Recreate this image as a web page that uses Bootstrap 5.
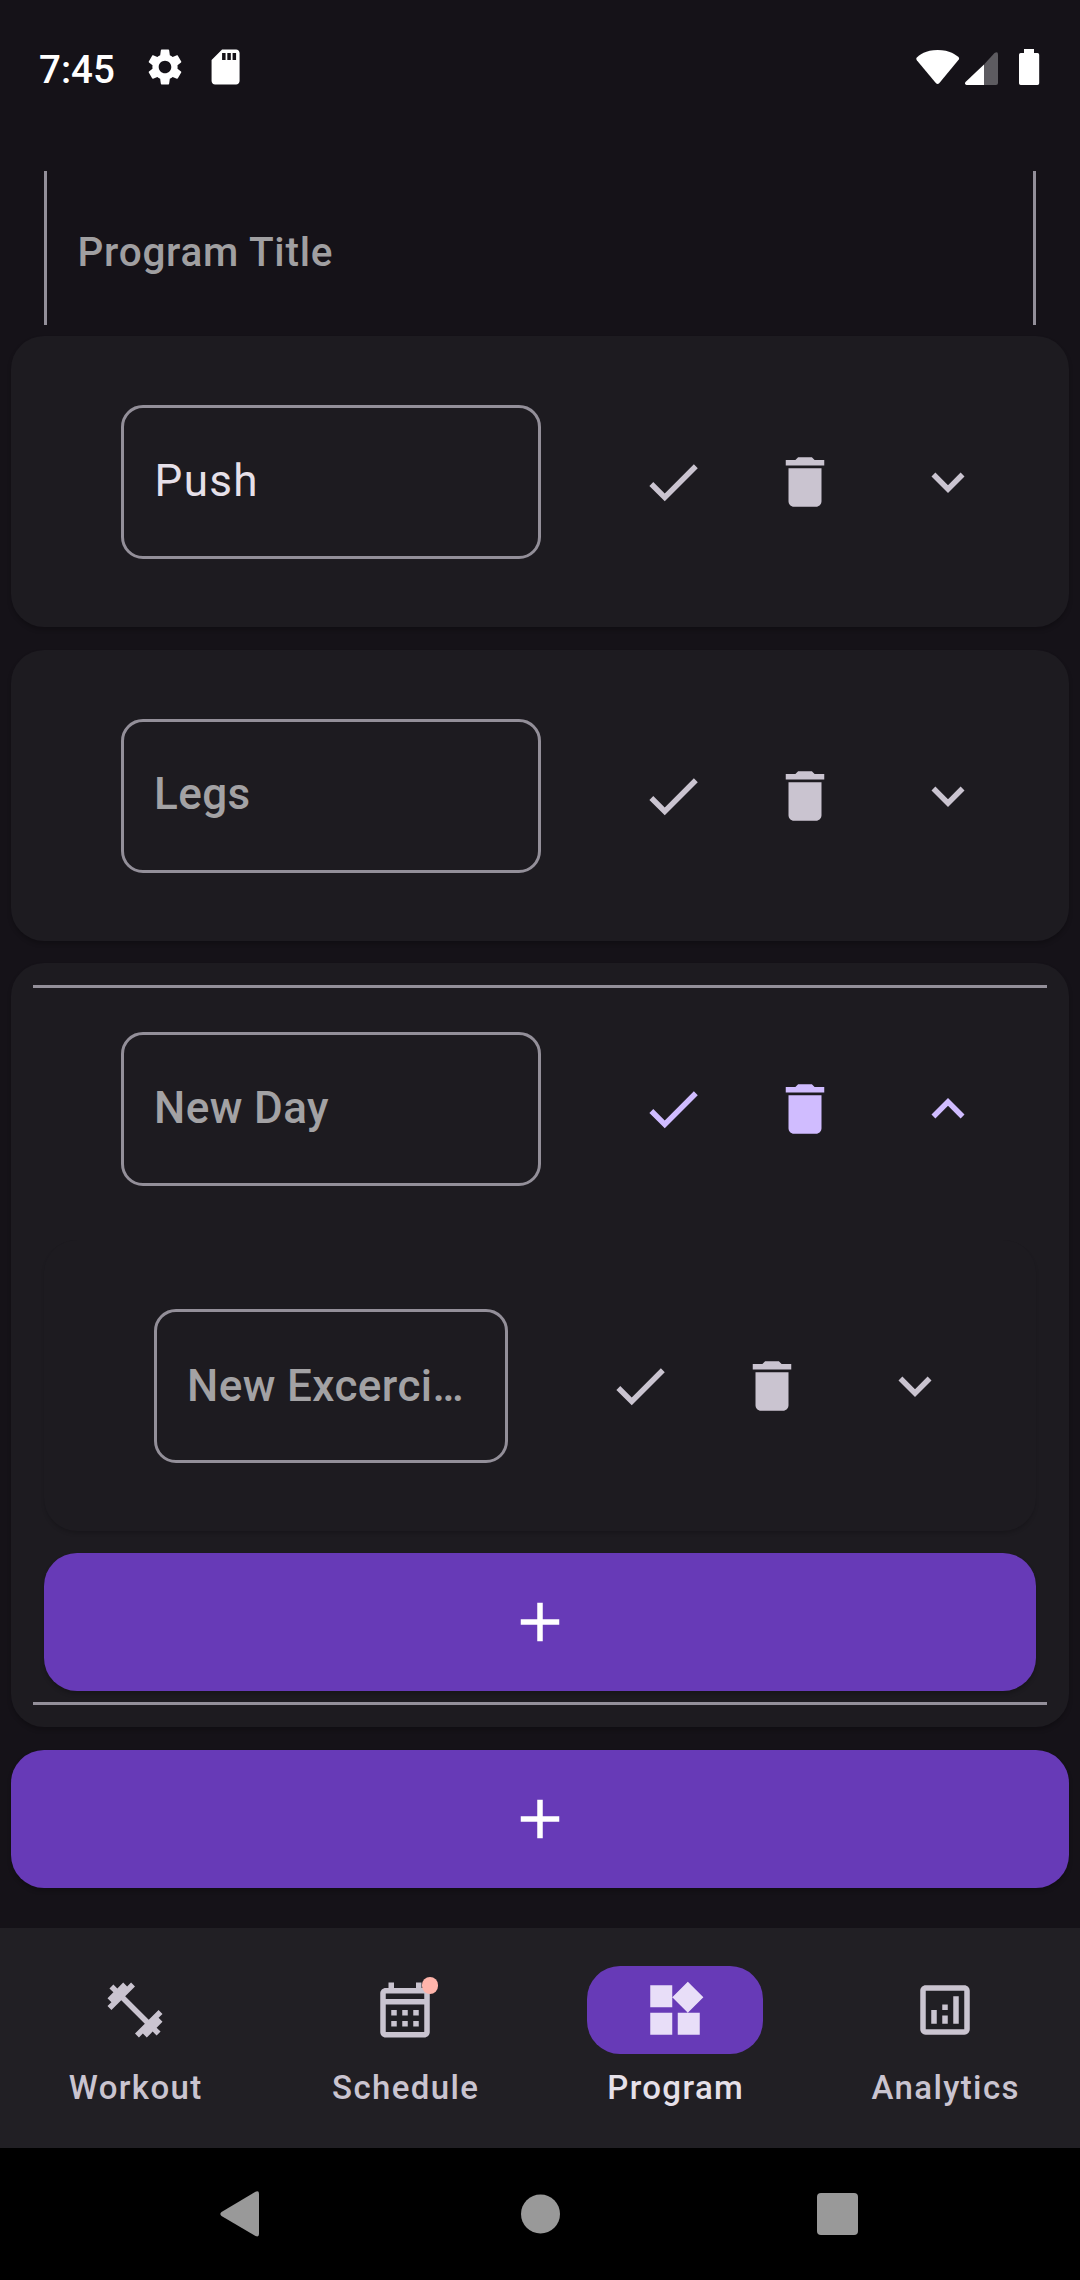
<!DOCTYPE html>
<html lang="en" data-bs-theme="dark">
<head>
<meta charset="utf-8">
<meta name="viewport" content="width=device-width, initial-scale=1">
<title>Program</title>
<link rel="stylesheet" href="https://cdn.jsdelivr.net/npm/bootstrap@5.3.0/dist/css/bootstrap.min.css">
<style>
:root{--surface:#151218;--panel:#1d1b20;--navbg:#211f24;--outline:#938f99;--soft:#cac4d0;--accent:#d0bcff;--purple:#673ab7}
html,body{margin:0;background:var(--surface)}
body{width:1080px;height:2280px;overflow:hidden;font-family:Roboto,"Noto Sans",sans-serif;color:#e6e0e9;letter-spacing:0}
svg{display:block;flex:none;fill:currentColor}
.status-bar{height:171px;padding:46px 0 0 39px;color:#fff}
.clock{font-size:38.5px;font-weight:500;line-height:48px;width:104.5px;letter-spacing:0}
.card-icon{margin:0 auto 0 17px}
.content-area{height:1757px}
.title-field{height:154px;margin:0 44px 11px;padding:9px 30.5px 0;border:solid var(--outline);border-width:0 3px;font-size:40.5px;font-weight:500;letter-spacing:.75px;color:#a09fa1}
.day-card{background:var(--panel);border:0;border-radius:33px;margin:0 11px 23px;box-shadow:0 3px 4px rgba(0,0,0,.22)}
.day-card.tight{margin-bottom:22px}
.day-card.nested{margin:0 33px 22px;box-shadow:0 3px 4px -1px rgba(0,0,0,.2)}
.head-row{height:291px;padding:0 88px 0 110px}
.nested .head-row{padding-top:1px}
.name-field{height:154px;border:3px solid var(--outline);border-radius:22px;background:transparent;padding:0 30px 2px;margin-right:66px;font-size:44px;line-height:1.2;min-width:0}
.name-field.filled{font-weight:400;letter-spacing:1.375px;color:#e6e0e9;padding-bottom:0;padding-left:30.5px}
.name-field.hint{font-weight:500;letter-spacing:.42px;color:#a3a2a4}
.nested .name-field{padding-bottom:0}
.tool{width:132px;height:132px;color:var(--soft);border:0;background:none;padding:0}
.chev{width:66px;margin-left:44px;color:var(--soft)}
.open-row .tool,.open-row .chev{color:var(--accent)}
.open-row .chev svg{transform:rotate(180deg)}
.rule{height:3px;background:var(--outline);margin:0 22px}
.rule.last{margin-bottom:22px}
.open-card{height:764px;padding-top:22px}
.head-row.open-row{height:242px}
.add-btn{height:138px;border:0;border-radius:33px;background:var(--purple);color:#fff;box-shadow:0 3px 4px rgba(0,0,0,.22)}
.add-inner{margin:0 33px 11px}
.add-outer{margin:0 11px}
.tab-bar{height:220px;background:var(--navbg);padding-top:38px}
.tab-item{color:var(--soft);font-size:33px;font-weight:500;letter-spacing:1.375px;line-height:46px}
.tab-item>span{padding-left:1.4px}
.pill{width:176px;height:88px;border-radius:33px;margin-bottom:11px}
.tab-item.current{color:#e6e0e9}
.tab-item.current .pill{background:var(--purple);color:#e8def8}
.alert-dot{width:16.5px;height:16.5px;border-radius:50%;background:#ffb4ab;top:11px;right:55px}
.system-bar{height:132px;background:#000;color:#999;padding-left:220px}
.nav-home{margin-left:262px}
.nav-recent{margin-left:257px}
</style>
</head>
<body class="d-flex flex-column">
<svg width="0" height="0" class="d-none" aria-hidden="true">
  <symbol id="i-check" viewBox="0 0 24 24"><path d="M9 16.17 4.83 12l-1.42 1.41L9 19 21 7l-1.41-1.41z"/></symbol>
  <symbol id="i-trash" viewBox="0 0 24 24"><path d="M6 19c0 1.1.9 2 2 2h8c1.1 0 2-.9 2-2V7H6v12zM19 4h-3.5l-1-1h-5l-1 1H5v2h14V4z"/></symbol>
  <symbol id="i-chev" viewBox="0 0 24 24"><path d="M16.59 8.59 12 13.17 7.41 8.59 6 10l6 6 6-6z"/></symbol>
  <symbol id="i-plus" viewBox="0 0 24 24"><path d="M19 13h-6v6h-2v-6H5v-2h6V5h2v6h6z"/></symbol>
</svg>

<header class="status-bar d-flex align-items-start">
  <div class="clock">7:45</div>
  <svg width="42" height="42" viewBox="0 0 24 24"><path d="M19.14 12.94c.04-.3.06-.61.06-.94 0-.32-.02-.64-.07-.94l2.03-1.58c.18-.14.23-.41.12-.61l-1.92-3.32c-.12-.22-.37-.29-.59-.22l-2.39.96c-.5-.38-1.03-.7-1.62-.94L14.4 2.51c-.04-.29-.24-.51-.48-.51h-3.84c-.24 0-.43.22-.47.51l-.36 2.84c-.59.24-1.13.57-1.62.94l-2.39-.96c-.22-.08-.47 0-.59.22L2.74 8.87c-.12.21-.08.47.12.61l2.03 1.58c-.05.3-.09.63-.09.94s.02.64.07.94l-2.03 1.58c-.18.14-.23.41-.12.61l1.92 3.32c.12.22.37.29.59.22l2.39-.96c.5.38 1.03.7 1.62.94l.36 2.84c.05.29.24.51.48.51h3.84c.24 0 .44-.22.47-.51l.36-2.84c.59-.24 1.13-.56 1.62-.94l2.39.96c.22.08.47 0 .59-.22l1.92-3.32c.12-.22.07-.47-.12-.61l-2.01-1.58zM12 15.6c-1.98 0-3.6-1.62-3.6-3.6s1.62-3.6 3.6-3.6 3.6 1.62 3.6 3.6-1.62 3.6-3.6 3.6z"/></svg>
  <svg class="card-icon" width="42" height="42" viewBox="-.9 0 24 24"><path d="M18 2h-8L4 8v12c0 1.1.9 2 2 2h12c1.1 0 2-.9 2-2V4c0-1.1-.9-2-2-2zm-6 6h-2V4h2v4zm3 0h-2V4h2v4zm3 0h-2V4h2v4z"/></svg>
  <svg width="164" height="42" viewBox="916 46 164 42">
    <path d="M937.600 50C950 50 956 55 958.600 57.300q1 1.200 0 2.500L939.200 83.300q-1.600 1.400-3.200 0L916.800 60.300q-1-1.700 0-2.700C919.500 55 925.600 50 937.600 50z"/>
    <path fill="#5d5b60" d="M984 64.500 994.500 53q3.500-2.300 3.500 1.500V83q0 2-2 2h-12z"/>
    <path d="M984 64.500V85h-17.500q-2.500-1-1-3z"/>
    <path d="M1024 49h10v4h3.500q1.700 0 1.700 1.700V83.300q0 1.700-1.700 1.700h-16.800q-1.700 0-1.700-1.700V54.700q0-1.700 1.700-1.700h3.300z"/>
  </svg>
</header>

<main class="content-area">
  <div class="title-field d-flex align-items-center">Program Title</div>

  <section class="card day-card">
    <div class="head-row d-flex align-items-center">
      <div class="name-field filled flex-fill d-flex align-items-center">Push</div>
      <button class="tool d-flex align-items-center justify-content-center" aria-label="Save"><svg width="66" height="66"><use href="#i-check"/></svg></button>
      <button class="tool d-flex align-items-center justify-content-center" aria-label="Delete"><svg width="66" height="66"><use href="#i-trash"/></svg></button>
      <div class="chev"><svg width="66" height="66"><use href="#i-chev"/></svg></div>
    </div>
  </section>

  <section class="card day-card tight">
    <div class="head-row d-flex align-items-center">
      <div class="name-field hint flex-fill d-flex align-items-center">Legs</div>
      <button class="tool d-flex align-items-center justify-content-center" aria-label="Save"><svg width="66" height="66"><use href="#i-check"/></svg></button>
      <button class="tool d-flex align-items-center justify-content-center" aria-label="Delete"><svg width="66" height="66"><use href="#i-trash"/></svg></button>
      <div class="chev"><svg width="66" height="66"><use href="#i-chev"/></svg></div>
    </div>
  </section>

  <section class="card day-card open-card">
    <div class="rule"></div>
    <div class="head-row open-row d-flex align-items-center">
      <div class="name-field hint flex-fill d-flex align-items-center">New Day</div>
      <button class="tool d-flex align-items-center justify-content-center" aria-label="Save"><svg width="66" height="66"><use href="#i-check"/></svg></button>
      <button class="tool d-flex align-items-center justify-content-center" aria-label="Delete"><svg width="66" height="66"><use href="#i-trash"/></svg></button>
      <div class="chev"><svg width="66" height="66"><use href="#i-chev"/></svg></div>
    </div>
    <div class="card day-card nested mt-auto">
      <div class="head-row d-flex align-items-center">
        <div class="name-field hint flex-fill d-flex align-items-center text-nowrap">New Excerci…</div>
        <button class="tool d-flex align-items-center justify-content-center" aria-label="Save"><svg width="66" height="66"><use href="#i-check"/></svg></button>
        <button class="tool d-flex align-items-center justify-content-center" aria-label="Delete"><svg width="66" height="66"><use href="#i-trash"/></svg></button>
        <div class="chev"><svg width="66" height="66"><use href="#i-chev"/></svg></div>
      </div>
    </div>
    <button class="add-btn add-inner d-flex align-items-center justify-content-center" aria-label="Add exercise"><svg width="66" height="66"><use href="#i-plus"/></svg></button>
    <div class="rule last"></div>
  </section>

  <div class="add-outer d-grid">
    <button class="add-btn d-flex align-items-center justify-content-center" aria-label="Add day"><svg width="66" height="66"><use href="#i-plus"/></svg></button>
  </div>
</main>

<nav class="tab-bar d-flex text-center">
  <div class="tab-item col-3 d-flex flex-column align-items-center">
    <div class="pill d-flex align-items-center justify-content-center"><svg width="66" height="66" viewBox="0 0 24 24"><path d="M20.57 14.86 22 13.43 20.57 12 17 15.57 8.430 7 12 3.430 10.570 2 9.140 3.430 7.710 2 5.570 4.140 4.140 2.710 2.710 4.140l1.430 1.430L2 7.710l1.430 1.430L2 10.570 3.430 12 7 8.430 15.570 17 12 20.570 13.430 22l1.430-1.430L16.290 22l2.140-2.140 1.430 1.430 1.430-1.430-1.430-1.430L22 16.290z"/></svg></div>
    <span>Workout</span>
  </div>
  <div class="tab-item col-3 d-flex flex-column align-items-center">
    <div class="pill position-relative d-flex align-items-center justify-content-center"><svg width="66" height="66" viewBox="0 0 24 24"><path d="M19 4h-1V2h-2v2H8V2H6v2H5c-1.110 0-2 .9-2 2v14c0 1.100.890 2 2 2h14c1.100 0 2-.9 2-2V6c0-1.100-.9-2-2-2zm0 16H5V10h14v10zm0-12H5V6h14v2zM9 14H7v-2h2v2zm4 0h-2v-2h2v2zm4 0h-2v-2h2v2zm-8 4H7v-2h2v2zm4 0h-2v-2h2v2zm4 0h-2v-2h2v2z"/></svg><span class="alert-dot position-absolute"></span></div>
    <span>Schedule</span>
  </div>
  <div class="tab-item current col-3 d-flex flex-column align-items-center">
    <div class="pill d-flex align-items-center justify-content-center"><svg width="66" height="66" viewBox="0 0 24 24"><path d="M13 13v8h8v-8h-8zM3 21h8v-8H3v8zM3 3v8h8V3H3zm13.660-1.310L11 7.340 16.660 13l5.660-5.660z"/></svg></div>
    <span>Program</span>
  </div>
  <div class="tab-item col-3 d-flex flex-column align-items-center">
    <div class="pill d-flex align-items-center justify-content-center"><svg width="66" height="66" viewBox="0 0 24 24"><path d="M19 3H5c-1.100 0-2 .9-2 2v14c0 1.100.9 2 2 2h14c1.100 0 2-.9 2-2V5c0-1.100-.9-2-2-2zm0 16H5V5h14v14zM7 12h2v5H7zM15 7h2v10h-2zM11 14h2v3h-2zM11 10h2v2h-2z"/></svg></div>
    <span>Analytics</span>
  </div>
</nav>

<footer class="system-bar d-flex align-items-center">
  <svg width="39" height="46" viewBox="0 0 39 46"><path d="M35.500.8q3.500-1.600 3.500 2V43q0 3.600-3.500 2L1.500 25q-2.300-2 0-4z"/></svg>
  <svg class="nav-home" width="39" height="40" viewBox="0 0 39 40"><ellipse cx="19.500" cy="20" rx="19.500" ry="19.500"/></svg>
  <svg class="nav-recent" width="41" height="42" viewBox="0 0 41 42"><rect width="41" height="42" rx="4"/></svg>
</footer>
<script src="https://cdn.jsdelivr.net/npm/bootstrap@5.3.0/dist/js/bootstrap.bundle.min.js"></script>
</body>
</html>
